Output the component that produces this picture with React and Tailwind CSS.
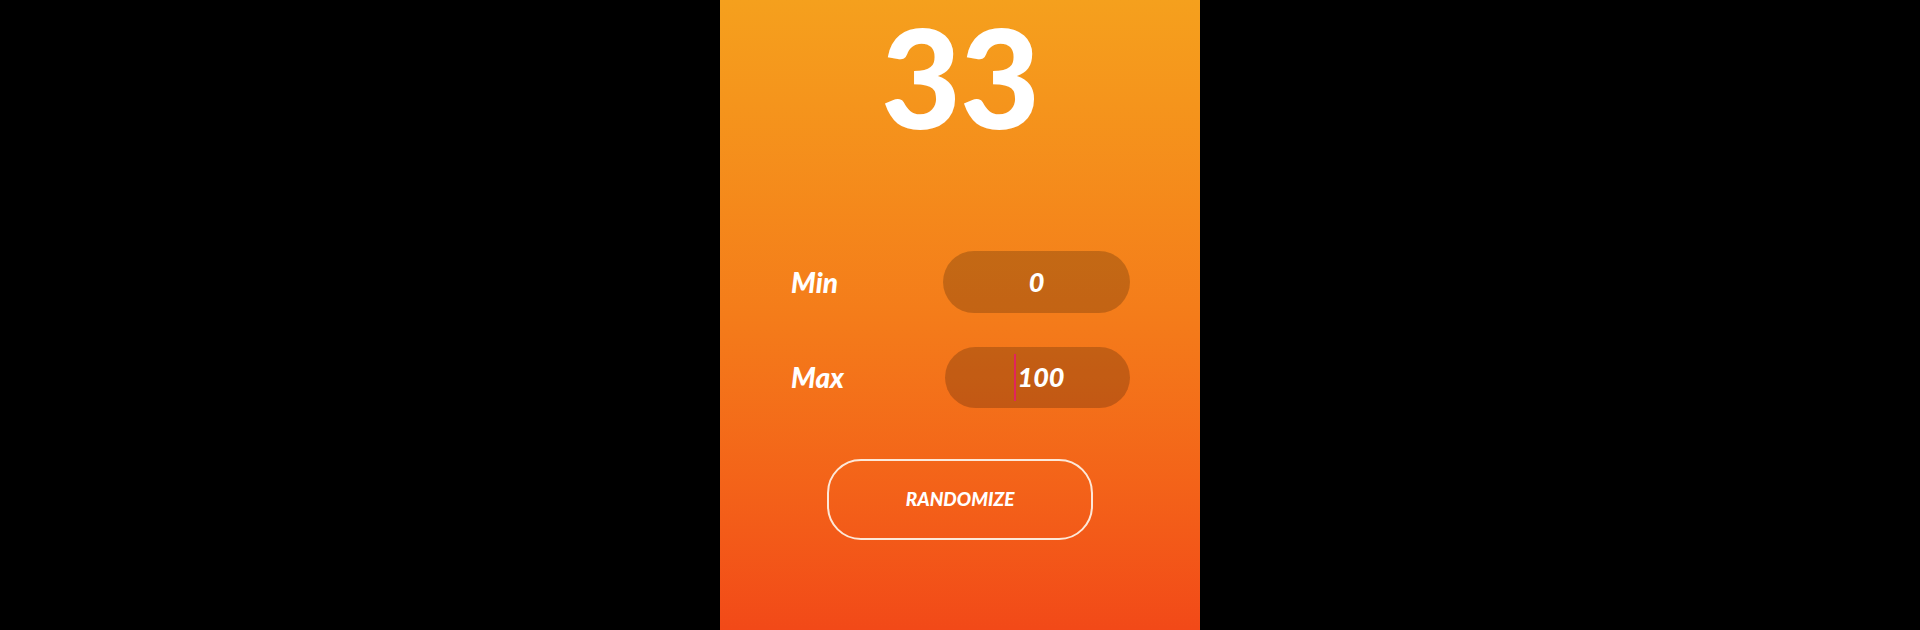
export default function App() {
  return (
    <div className="flex h-[630px] w-full justify-center bg-black">
      <div className="flex h-full w-[480px] flex-col items-center bg-gradient-to-b from-[#f5a01d] via-[#f47c1a] to-[#f24918] font-['Lato','Noto_Sans',sans-serif] text-white">
        <div className="text-[138px] font-black leading-[1.1] tracking-[-1px]">33</div>

        <div className="mt-[99px] flex w-full flex-col gap-[34px] pl-[71px] pr-[70px]">
          <div className="flex items-center justify-between">
            <span className="text-[28px] font-black italic">Min</span>
            <div className="flex h-[62px] w-[187px] items-center justify-center rounded-full bg-black/20">
              <span className="text-[27px] font-black italic">0</span>
            </div>
          </div>
          <div className="flex items-center justify-between">
            <span className="text-[28px] font-black italic">Max</span>
            <div className="flex h-[61px] w-[185px] items-center justify-center rounded-full bg-black/20">
              <span className="relative ml-[4px] pl-[3px] text-[27px] font-black italic">
                <span className="absolute -left-[1px] -top-[3px] h-[47px] w-[2px] bg-[#e0245e]" />
                100
              </span>
            </div>
          </div>
        </div>

        <button
          type="button"
          className="mt-[51px] flex h-[81px] w-[266px] items-center justify-center rounded-[34px] border-2 border-[#fde8d8] text-[19px] font-black italic"
        >
          RANDOMIZE
        </button>
      </div>
    </div>
  );
}
